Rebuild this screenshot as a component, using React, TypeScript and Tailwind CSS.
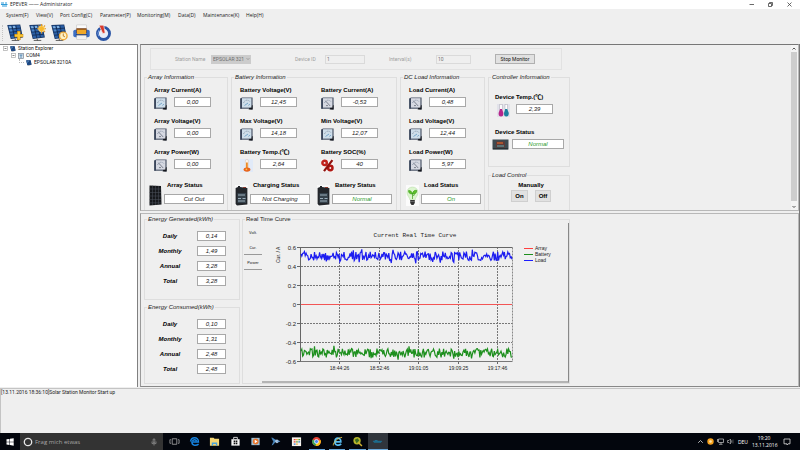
import React, { useId } from 'react';

const ui = "font-['Open_Sans',sans-serif]";
const small = "font-['Roboto',sans-serif]";

/* ---------- icons ---------- */

function SolarPanel({ children, className }: { children?: React.ReactNode; className: string }) {
  return (
    <svg viewBox="0 0 18 18" className={className} aria-hidden="true">
      <path d="M0.3 1 L14 0.4 L16.8 14.4 L4 16 Z" fill="#15325f" />
      <path d="M1.2 1.8 L13.4 1.2 L15.8 13.6 L4.6 15.1 Z" fill="#2a5fa6" />
      <path d="M5.2 1.4 L8.2 14.8 M9.3 1.3 L12.1 14.2 M1.8 5.2 L14.2 4.4 M2.8 8.6 L14.9 7.7 M3.7 11.9 L15.5 10.9" stroke="#0e2549" strokeWidth="0.8" />
      <path d="M1.9 2.4 L4.4 2.3 L5 4.4 L2.5 4.6 Z M6 2.2 L8.5 2.1 L9 4.2 L6.6 4.4 Z" fill="#7fb0e0" />
      <path d="M2.9 5.9 L5.3 5.7 L5.8 7.7 L3.5 7.9 Z" fill="#4e86c8" />
      <path d="M8.5 15.5 L9 17.3 M5 17.4 H13" stroke="#333" strokeWidth="0.8" fill="none" />
      {children}
    </svg>
  );
}

function PrinterIcon() {
  return (
    <svg viewBox="0 0 18 18" className="size-[17px]" aria-hidden="true">
      <rect x="4" y="1" width="10" height="7" fill="#fafafa" stroke="#bbb" strokeWidth="0.5" />
      <rect x="0.3" y="6" width="17.4" height="8" rx="2" fill="#3c6fc4" />
      <rect x="3.6" y="4.5" width="10.8" height="5" fill="#7a3f14" />
      <rect x="4.2" y="6" width="9.6" height="5" fill="#f0a828" />
      <rect x="3" y="11" width="12" height="2" fill="#16336e" />
      <rect x="4" y="12" width="10" height="4.5" fill="#f2f2f2" stroke="#bbb" strokeWidth="0.5" />
    </svg>
  );
}

function PowerIcon() {
  return (
    <svg viewBox="0 0 18 18" className="size-[17px]" aria-hidden="true">
      <circle cx="9" cy="10" r="6.4" fill="#e8eef8" stroke="#2a55a5" strokeWidth="3" />
      <path d="M4.2 6.5 A6 6 0 0 0 4 13" stroke="#7ea6e4" strokeWidth="1" fill="none" />
      <path d="M4.2 1.2 L9.2 1.2 L10.8 9.6 L8.2 10 Z" fill="#d83a2c" stroke="#f3f3f3" strokeWidth="0.7" />
    </svg>
  );
}

function Meter({ tone }: { tone: 'blue' | 'gray' }) {
  const face = tone === 'blue' ? '#cfdeea' : '#d6d9e2';
  return (
    <svg viewBox="0 0 13 13" className="size-[13px] shrink-0" aria-hidden="true">
      <path d="M0.3 1.5 L2 0.4 H12.6 V12.6 H11 L9 11.8 H0.3 Z" fill="#4b5568" />
      <path d="M10 9.6 L12.6 8 V12.6 H8.6 Z" fill="#14161c" />
      <rect x="2" y="1.2" width="9.4" height="9.4" fill={face} />
      <path d="M0.3 1.5 H1.8 V11.8 H0.3 Z" fill="#39455a" />
      <path d="M3.6 6 A3.6 3.6 0 0 1 9.8 4.4" stroke="#6d7c92" strokeWidth="0.7" fill="none" strokeDasharray="1 0.7" />
      {tone === 'gray' ? (
        <path d="M4.4 3.8 L9.2 9 M5 8.6 H7" stroke="#555b6c" strokeWidth="0.7" />
      ) : (
        <path d="M4.5 8.5 L8 6 M8.5 8.5 L9.8 7" stroke="#5d97c2" strokeWidth="0.8" />
      )}
    </svg>
  );
}

function Thermometer() {
  return (
    <svg viewBox="0 0 13 13" className="size-[13px] shrink-0" aria-hidden="true">
      <rect width="13" height="13" fill="#e1eaf8" />
      <rect x="5.4" y="0.5" width="3" height="9" rx="1.3" fill="#fbf4ee" stroke="#d9c0b0" strokeWidth="0.5" />
      <rect x="6" y="3.5" width="1.8" height="6.5" fill="#ee8c28" />
      <ellipse cx="7" cy="10.6" rx="3.4" ry="2.1" fill="#e8641c" />
      <circle cx="6.4" cy="10.3" r="0.9" fill="#ffc14d" />
    </svg>
  );
}

function Percent() {
  return (
    <svg viewBox="0 0 13 13" className="size-[13px] shrink-0" aria-hidden="true">
      <rect width="13" height="13" fill="#f6f3f2" />
      <circle cx="3.6" cy="3.9" r="2.2" fill="none" stroke="#c0211b" strokeWidth="2.5" />
      <circle cx="9.3" cy="9" r="2.2" fill="none" stroke="#b01813" strokeWidth="2.5" />
      <path d="M11.4 1.2 L3 12.2" stroke="#8f120e" strokeWidth="2.2" />
    </svg>
  );
}

function Flasks() {
  return (
    <svg viewBox="0 0 13 13" className="size-[13px] shrink-0" aria-hidden="true">
      <rect width="13" height="13" fill="#e2e2ea" />
      <rect x="2.8" y="0.5" width="2.4" height="5" fill="#fff" stroke="#a9a9b4" strokeWidth="0.5" />
      <path d="M3 5 H5 L6.4 9 Q6.5 12.5 4 12.5 Q1.4 12.5 1.6 9 Z" fill="#b5268b" />
      <rect x="8" y="0.5" width="2.4" height="5" fill="#fff" stroke="#a9a9b4" strokeWidth="0.5" />
      <path d="M8.2 5 H10.2 L11.8 9 Q11.8 12.5 9.3 12.5 Q6.8 12.5 7 9 Z" fill="#1a7f9e" />
    </svg>
  );
}

function ArrayIcon() {
  return (
    <svg viewBox="0 0 13 21" className="h-[21px] w-[13px] shrink-0" aria-hidden="true">
      <path d="M0.5 0.5 L12 1 L12.5 19.5 L0.5 20.5 Z" fill="#16181c" />
      <path d="M3.5 0.6 V20 M6.5 0.8 V20 M9.5 1 V19.6 M0.5 4 H12 M0.5 7.5 H12 M0.5 11 H12 M0.5 14.5 H12 M0.5 17.8 H12" stroke="#4c525c" strokeWidth="0.5" />
    </svg>
  );
}

function BatteryIcon() {
  return (
    <svg viewBox="0 0 13 21" className="h-[21px] w-[13px] shrink-0" aria-hidden="true">
      <rect width="13" height="21" fill="#f8f8f8" />
      <path d="M0.6 3 L3 2 V1 H5 V2 L12.4 3 V19.5 L2 20.5 L0.6 19 Z" fill="#23262b" />
      <rect x="2.5" y="8" width="8.5" height="10" fill="#36424c" />
      <path d="M3 10 H10 M3 13.5 H6 M7.5 13.5 H10.5 M3 16 H10" stroke="#a9bcc8" strokeWidth="0.9" />
      <path d="M8 2.5 H11" stroke="#8b3a2e" strokeWidth="1" />
    </svg>
  );
}

function BulbIcon() {
  return (
    <svg viewBox="0 0 13 21" className="h-[21px] w-[13px] shrink-0" aria-hidden="true">
      <rect width="13" height="21" fill="#fbfbfb" />
      <path d="M6.5 2 C10 2 12 4.5 12 7.5 C12 11 9.5 12 9 15 H4 C3.5 12 1 11 1 7.5 C1 4.5 3 2 6.5 2 Z" fill="#dcf5cf" stroke="#b7d9a8" strokeWidth="0.5" />
      <path d="M6.5 14 V8 M6.5 9 C3 9 2.4 7 2.6 5.5 C4.6 5.5 6 6.5 6.5 9 C7 6 8.5 5 10.8 5.4 C10.8 8 9 9.4 6.5 9 M6.5 11 L9 9.5" fill="#5fc22c" stroke="#3f9f1c" strokeWidth="0.7" />
      <path d="M4.2 15 H8.8 V18 L7.5 20 H5.5 L4.2 18 Z" fill="#333" />
      <path d="M4.2 16.5 H8.8" stroke="#999" strokeWidth="0.5" />
    </svg>
  );
}

function ControllerIcon() {
  return (
    <svg viewBox="0 0 17 11" className="h-[11px] w-[17px] shrink-0" aria-hidden="true">
      <rect x="0.5" y="0.5" width="16" height="10" fill="#3d4a50" />
      <rect x="4" y="2.5" width="9" height="6" fill="#5d3b38" />
      <rect x="5" y="3" width="6" height="2" fill="#a9532f" />
      <path d="M5 7 H12" stroke="#58b0b5" strokeWidth="1" />
      <path d="M1 9.8 H16" stroke="#20282c" strokeWidth="1" />
    </svg>
  );
}

/* ---------- building blocks ---------- */

function Group({ title, className, upright, children }: {
  title: string; className?: string; upright?: boolean; children: React.ReactNode;
}) {
  return (
    <fieldset className={`min-w-0 border border-[#dedede] ${className ?? ''}`}>
      <legend className={`ml-[2px] h-2 px-px text-[6px] leading-2 whitespace-nowrap text-[#222] ${upright ? '' : 'italic'}`}>{title}</legend>
      {children}
    </fieldset>
  );
}

function Field({ id, value, className }: { id: string; value: string; className: string }) {
  return (
    <input
      id={id}
      readOnly
      value={value}
      className={`block h-[10px] border border-[#a8a8a8] bg-white p-0 text-center text-[6px] leading-2 italic outline-none ${className}`}
    />
  );
}

function Reading({ label, value, icon }: { label: string; value: string; icon: React.ReactNode }) {
  const id = useId();
  return (
    <div>
      <label htmlFor={id} className="block text-[6px] leading-2 font-bold whitespace-nowrap">{label}</label>
      <div className="mt-[3px] flex h-[13px] gap-[7px]">
        {icon}
        <Field id={id} value={value} className="w-[37px] text-[#222]" />
      </div>
    </div>
  );
}

function Status({ label, value, icon, ok }: { label: string; value: string; icon: React.ReactNode; ok?: boolean }) {
  const id = useId();
  return (
    <div className="flex items-end gap-[2px]">
      {icon}
      <div className="mb-[2px]">
        <label htmlFor={id} className="block pl-[3px] text-[6px] leading-2 font-bold whitespace-nowrap">{label}</label>
        <Field id={id} value={value} className={`mt-[5px] w-[60px] ${ok ? 'text-[#2a9a2a]' : 'text-[#222]'}`} />
      </div>
    </div>
  );
}

function Energy({ title, rows, className }: { title: string; rows: [string, string][]; className: string }) {
  const base = useId();
  return (
    <Group title={title} className={`w-24 ${className}`}>
      <div className="flex flex-col gap-[5px] pt-2 pr-[13px]">
        {rows.map(([label, value]) => (
          <div key={label} className="flex items-center justify-end gap-[15px]">
            <label htmlFor={base + label} className="w-6 text-center text-[6px] leading-2 font-bold whitespace-nowrap italic">{label}</label>
            <Field id={base + label} value={value} className="w-[29px] text-[#222]" />
          </div>
        ))}
      </div>
    </Group>
  );
}

/* ---------- chart ---------- */

function series(seed: number, mid: number): string {
  let s = seed;
  const next = () => {
    s = (s * 1664525 + 1013904223) % 4294967296;
    return s / 4294967296;
  };
  const points: string[] = [];
  for (let i = 0; i <= 250; i++) {
    const spread = next() > 0.9 ? 15 : 9;
    const y = mid + (next() - 0.5) * spread;
    points.push(`${(39 + (i * 211) / 250).toFixed(1)},${y.toFixed(1)}`);
  }
  return points.join(' ');
}

const yTicks = ['0.6', '0.4', '0.2', '0', '-0.2', '-0.4', '-0.6'];
const xTicks: [number, string][] = [[77.5, '18:44:26'], [117.5, '18:52:46'], [156.5, '19:01:05'], [196.5, '19:09:25'], [235.5, '19:17:46']];

function Chart() {
  return (
    <svg viewBox="0 0 306 158" className="block h-[158px] w-[306px]" role="img" aria-label="Current Real Time Curve">
      <text x="153" y="14" textAnchor="middle" className="fill-[#222] font-['Liberation_Mono',monospace] text-[6px]">Current Real Time Curve</text>
      <text transform="translate(18 40) rotate(-90)" className="fill-[#222] text-[5px]">Cur. / A</text>
      {yTicks.map((t, i) => (
        <g key={t}>
          <text x="34" y={26.5 + i * 19} textAnchor="end" className="fill-[#222] text-[6px]">{t}</text>
          <path d={`M35 ${24.5 + i * 19} H39`} stroke="#666" />
          {i > 0 && i < 6 && <path d={`M39 ${24.5 + i * 19} H250`} stroke="#777" strokeDasharray="2 1" />}
        </g>
      ))}
      {xTicks.map(([x, t]) => (
        <g key={t}>
          <path d={`M${x} 24 V139`} stroke="#777" strokeDasharray="2 1" />
          <path d={`M${x} 138 V141`} stroke="#666" />
          <text x={x} y="147" textAnchor="middle" className="fill-[#222] text-[5px]">{t}</text>
        </g>
      ))}
      <path d="M38.5 139 V24.5 H250.5" stroke="#666" fill="none" />
      <path d="M250.5 24.5 V138.5" stroke="#888" strokeDasharray="2 1" />
      <path d="M38.5 138.5 H250.5" stroke="#777" />
      <path d="M39 81.5 H250" stroke="#f25555" />
      <polyline points={series(11, 130)} fill="none" stroke="#1d8f1d" strokeWidth="1.2" />
      <polyline points={series(77, 33)} fill="none" stroke="#1c1cf0" strokeWidth="1.2" />
      {[['Array', '#ff4040'], ['Battery', '#1d8f1d'], ['Load', '#1c1cff']].map(([name, color], i) => (
        <g key={name}>
          <path d={`M262 ${25.5 + i * 6} H271`} stroke={color} />
          <text x="273" y={27 + i * 6} className="fill-[#222] text-[5px]">{name}</text>
        </g>
      ))}
    </svg>
  );
}

/* ---------- window parts ---------- */

const menus: [string, string][] = [
  ['System(F)', 'w-[30px]'], ['View(V)', 'w-6'], ['Port Config(C)', 'w-10'], ['Parameter(P)', 'w-[37px]'],
  ['Monitoring(M)', 'w-[41px]'], ['Data(D)', 'w-[25px]'], ['Maintenance(K)', 'w-[43px]'], ['Help(H)', 'w-6'],
];

function Header() {
  return (
    <header className={`bg-[#efefef] ${ui}`}>
      <div className="flex h-[9px] items-center bg-white pl-px">
        <svg viewBox="0 0 7 5" className="h-[5px] w-[7px]" aria-hidden="true">
          <path d="M0 1 H3 M0 2.5 H6.5 M1 4 H6 M4 1 H6" stroke="#2f9bd8" strokeWidth="1" />
        </svg>
        <h1 className="ml-[2px] flex-1 text-[5px] leading-[9px] whitespace-nowrap text-[#222]">EPEVER —— Administrator</h1>
        <div className="flex gap-3 pr-[7px]">
          <button aria-label="Minimize" className="w-[7px]">
            <svg viewBox="0 0 7 7" className="size-[7px]"><path d="M1.5 3.5 H6" stroke="#444" strokeWidth="0.8" /></svg>
          </button>
          <button aria-label="Restore" className="w-[7px]">
            <svg viewBox="0 0 7 7" className="size-[7px]"><path d="M1.5 2.5 H4.5 V5.5 H1.5 Z M2.5 2.5 V1.5 H5.5 V4.5 H4.5" fill="none" stroke="#444" strokeWidth="0.8" /></svg>
          </button>
          <button aria-label="Close" className="w-[7px]">
            <svg viewBox="0 0 7 7" className="size-[7px]"><path d="M1.5 1.5 L5.5 5.5 M5.5 1.5 L1.5 5.5" stroke="#444" strokeWidth="0.8" /></svg>
          </button>
        </div>
      </div>
      <nav className="flex h-3 items-center pl-[6px] text-[5px] leading-3 text-[#222]">
        {menus.map(([name, width]) => (
          <button key={name} className={`shrink-0 text-left whitespace-nowrap ${width}`}>{name}</button>
        ))}
      </nav>
      <div className="flex h-[23px] items-center gap-[5px] pl-[2px]">
        <div className="h-4 border-l border-dotted border-[#c4c4c4]" />
        <button aria-label="Add station" className="-ml-px">
          <SolarPanel className="size-[17px]">
            <path d="M12.5 7.5 V17 M7.8 12.3 H17.2" stroke="#b87a0c" strokeWidth="3.6" />
            <path d="M12.5 8 V16.6 M8.3 12.3 H16.8" stroke="#fbc834" strokeWidth="2.5" />
          </SolarPanel>
        </button>
        <button aria-label="Station settings">
          <SolarPanel className="size-[17px]">
            <circle cx="13.3" cy="5" r="3.2" fill="#f8b82c" stroke="#fde08a" strokeWidth="1" />
            <path d="M13.3 0 V2 M13.3 8 V10 M8.5 5 H10 M16.5 5 H18 M10 1.8 L11 2.8 M15.7 7.4 L17 8.6 M17 1.6 L15.8 2.7" stroke="#e0982a" strokeWidth="1.2" />
          </SolarPanel>
        </button>
        <button aria-label="Station history">
          <SolarPanel className="size-[17px]">
            <circle cx="13" cy="12.6" r="4" fill="#fdf0c4" stroke="#eda93a" strokeWidth="1.5" />
            <path d="M13 10 V12.8 L14.8 13.6" stroke="#b8741a" strokeWidth="0.9" fill="none" />
          </SolarPanel>
        </button>
        <button aria-label="Print"><PrinterIcon /></button>
        <button aria-label="Exit"><PowerIcon /></button>
      </div>
    </header>
  );
}

function Toggle() {
  return (
    <svg viewBox="0 0 5 5" className="size-[5px]" aria-hidden="true">
      <rect x="0.5" y="0.5" width="4" height="4" fill="#fff" stroke="#aaa" strokeWidth="0.7" />
      <path d="M1.5 2.5 H3.5" stroke="#555" strokeWidth="0.7" />
    </svg>
  );
}

function Tree() {
  return (
    <aside className={`w-[138px] shrink-0 border-t border-r border-[#808080] bg-white pl-[3px] text-[5px] leading-[7px] text-[#111] ${small}`}>
      <ul>
        <li>
          <div className="flex items-center gap-[2px]">
            <Toggle />
            <SolarPanel className="size-[6px]" />
            Station Explorer
          </div>
          <ul className="pl-2">
            <li>
              <div className="flex items-center gap-[2px]">
                <Toggle />
                <svg viewBox="0 0 6 6" className="size-[6px]" aria-hidden="true">
                  <rect x="0.5" y="0.5" width="5" height="5" fill="#d7e2ec" stroke="#7b8794" strokeWidth="0.7" />
                  <path d="M1.5 2 H4.5 M3 2 V5" stroke="#3c78a8" strokeWidth="0.8" />
                </svg>
                COM4
              </div>
              <div className="flex items-center gap-[2px] pl-2">
                <span className="mb-[3px] h-[4px] w-[5px] border-b border-l border-dotted border-[#bbb]" />
                <SolarPanel className="size-[6px]" />
                <span>EPSOLAR 3210A</span>
              </div>
            </li>
          </ul>
        </li>
      </ul>
    </aside>
  );
}

function StationBar() {
  const dim = 'text-[5px] leading-2 text-[#a0a0a0]';
  return (
    <div className={`ml-[6px] flex h-[22px] w-[412px] items-center border border-[#e2e2e2] pl-6 ${small}`}>
      <label htmlFor="station" className={`w-9 ${dim}`}>Station Name</label>
      <div className="flex h-[9px] w-10 items-center bg-[#cccccc]">
        <select id="station" disabled className="w-9 appearance-none bg-transparent pl-[2px] text-[5px] leading-[9px] text-[#6f6f6f] opacity-100">
          <option>EPSOLAR 321</option>
        </select>
        <svg viewBox="0 0 4 4" className="-ml-px size-1" aria-hidden="true"><path d="M0.5 1 L2 2.7 L3.5 1" fill="none" stroke="#888" strokeWidth="0.6" /></svg>
      </div>
      <label htmlFor="device" className={`ml-11 w-[30px] ${dim}`}>Device ID</label>
      <input id="device" disabled defaultValue="1" className="h-[9px] w-10 border border-[#dadada] p-0 pl-px text-[5px] leading-2 text-[#777]" />
      <label htmlFor="interval" className={`ml-6 w-[47px] ${dim}`}>Interval(s)</label>
      <input id="interval" disabled defaultValue="10" className="h-[9px] w-[35px] border border-[#dadada] p-0 pl-px text-[5px] leading-2 text-[#777]" />
      <button className="ml-6 h-[10px] w-10 border border-[#b0b0b0] bg-[#e1e1e1] text-[5px] leading-2 text-[#111]">Stop Monitor</button>
    </div>
  );
}

function Monitor() {
  const tempId = useId();
  const statusId = useId();
  return (
    <section className="flex border border-[#b8b8b8] border-t-[#777] border-l-[#999]">
      <div className="flex-1 pt-[3px] pl-[3px]">
        <StationBar />
        <div className="mt-[3px] flex gap-[3px]">
          <Group title="Array Information" className="w-[84px] border-b-0 pb-1">
            <div className="flex flex-col gap-[7px] pt-[5px] pl-[9px]">
              <Reading label="Array Current(A)" value="0,00" icon={<Meter tone="blue" />} />
              <Reading label="Array Voltage(V)" value="0,00" icon={<Meter tone="gray" />} />
              <Reading label="Array Power(W)" value="0,00" icon={<Meter tone="gray" />} />
            </div>
            <div className="mt-[9px] pl-1"><Status label="Array Status" value="Cut Out" icon={<ArrayIcon />} /></div>
          </Group>
          <Group title="Battery Information" className="w-[166px] border-b-0 pb-1">
            <div className="grid grid-cols-[81px_1fr] gap-y-[7px] pt-[5px] pl-2">
              <Reading label="Battery Voltage(V)" value="12,45" icon={<Meter tone="blue" />} />
              <Reading label="Battery Current(A)" value="-0,53" icon={<Meter tone="gray" />} />
              <Reading label="Max Voltage(V)" value="14,18" icon={<Meter tone="blue" />} />
              <Reading label="Min Voltage(V)" value="12,07" icon={<Meter tone="blue" />} />
              <Reading label="Battery Temp.(℃)" value="2,64" icon={<Thermometer />} />
              <Reading label="Battery SOC(%)" value="40" icon={<Percent />} />
            </div>
            <div className="mt-[9px] grid grid-cols-[82px_1fr] pl-[3px]">
              <Status label="Charging Status" value="Not Charging" icon={<BatteryIcon />} />
              <Status label="Battery Status" value="Normal" icon={<BatteryIcon />} ok />
            </div>
          </Group>
          <Group title="DC Load Information" className="w-[85px] border-b-0 pb-1">
            <div className="flex flex-col gap-[7px] pt-[5px] pl-2">
              <Reading label="Load Current(A)" value="0,48" icon={<Meter tone="gray" />} />
              <Reading label="Load Voltage(V)" value="12,44" icon={<Meter tone="blue" />} />
              <Reading label="Load Power(W)" value="5,97" icon={<Meter tone="gray" />} />
            </div>
            <div className="mt-[9px] pl-[5px]"><Status label="Load Status" value="On" icon={<BulbIcon />} ok /></div>
          </Group>
          <div className="flex w-[82px] flex-col gap-1">
            <Group title="Controller Information" className="h-[94px]">
              <div className="pt-3 pl-[6px]">
                <label htmlFor={tempId} className="block text-[6px] leading-2 font-bold whitespace-nowrap">Device Temp.(℃)</label>
                <div className="mt-[3px] flex gap-[6px] pl-[2px]">
                  <Flasks />
                  <Field id={tempId} value="2,39" className="w-[37px] text-[#222]" />
                </div>
                <label htmlFor={statusId} className="mt-[11px] block text-[6px] leading-2 font-bold whitespace-nowrap">Device Status</label>
              </div>
              <div className="mt-[3px] flex gap-[3px] pl-[3px]">
                <ControllerIcon />
                <Field id={statusId} value="Normal" className="w-[52px] text-[#2a9a2a]" />
              </div>
            </Group>
            <Group title="Load Control" className="flex-1 border-b-0">
              <p className="pt-[2px] pl-1 text-center text-[6px] leading-2 font-bold">Manually</p>
              <div className="mt-px flex justify-center gap-[7px] pl-1">
                <button className="h-3 w-[17px] border border-[#cfcfcf] bg-[#e1e1e1] text-[6px] leading-[10px] font-bold">On</button>
                <button className="h-3 w-4 border border-[#cfcfcf] bg-[#e1e1e1] text-[6px] leading-[10px] font-bold">Off</button>
              </div>
            </Group>
          </div>
        </div>
      </div>
      <div className="flex w-[7px] flex-col bg-[#f4f4f4] pr-px">
        <button aria-label="Scroll up" className="h-[7px]">
          <svg viewBox="0 0 6 7" className="h-[7px] w-[6px]"><path d="M1.5 4.5 L3 3 L4.5 4.5" fill="none" stroke="#444" strokeWidth="0.9" /></svg>
        </button>
        <div className="flex-1 bg-[#cdcdcd]" />
        <button aria-label="Scroll down" className="h-[9px]">
          <svg viewBox="0 0 6 9" className="h-[9px] w-[6px]"><path d="M1.5 5 L3 6.5 L4.5 5" fill="none" stroke="#444" strokeWidth="0.9" /></svg>
        </button>
      </div>
    </section>
  );
}

function History() {
  return (
    <section className="mt-[2px] flex flex-1 gap-[2px] border border-[#b8b8b8] border-b-[#888] border-l-[#999] pt-px pb-[2px] pl-[3px]">
      <div className="flex flex-col gap-[3px]">
        <Energy title="Energy Generated(kWh)" className="h-[85px]" rows={[['Daily', '0,14'], ['Monthly', '1,49'], ['Annual', '3,28'], ['Total', '3,28']]} />
        <Energy title="Energy Consumed(kWh)" className="flex-1" rows={[['Daily', '0,10'], ['Monthly', '1,31'], ['Annual', '2,48'], ['Total', '2,48']]} />
      </div>
      <Group title="Real Time Curve" upright className="w-[328px]">
        <div className="flex">
          <div className={`flex w-[20px] flex-col items-start pt-[2px] pl-px text-[#222] ${small}`}>
            <button className="h-[15px] w-[18px] text-[4px] leading-[15px]">Volt.</button>
            <button className="h-[15px] w-[18px] border-b border-[#999] text-[4px] leading-[15px]">Cur.</button>
            <button className="h-[15px] w-[18px] border-b border-[#999] text-[4px] leading-[15px]">Power</button>
          </div>
          <div className="border-r border-b-2 border-r-[#888] border-b-[#b4b4b4]">
            <Chart />
          </div>
        </div>
      </Group>
    </section>
  );
}

/* ---------- taskbar ---------- */

const apps: { name: string; state?: 'open' | 'active'; art: React.ReactNode }[] = [
  { name: 'Task view', art: <path d="M3.5 3 H8.5 V9 H3.5 Z M2 4 H1 V8 H2 M10 4 H11 V8 H10" fill="none" stroke="#bbb" strokeWidth="0.8" /> },
  { name: 'Edge', art: <path d="M10.5 8.8 C7 11.3 3 10 3.2 6.6 H10.3 C10.3 3.2 8.2 2 6.2 2 C3.8 2 2 4 1.7 6 M3.8 5.4 C4.5 3.6 8 3.6 8.1 5.6" fill="none" stroke="#1683e0" strokeWidth="1.6" /> },
  { name: 'Explorer', art: <><path d="M1 2 H5 L6 3 H11 V10.5 H1 Z" fill="#f5d675" /><path d="M3 7 H9 V10.5 H7.5 V8.8 H4.5 V10.5 H3 Z" fill="#4aa3dc" /></> },
  { name: 'Store', art: <><path d="M1.5 3.5 H10.5 V10.5 H1.5 Z" fill="#f4f4f4" /><path d="M4 3.5 V1.5 H8 V3.5" fill="none" stroke="#f4f4f4" strokeWidth="0.9" /><path d="M4 5 H5.7 V6.7 H4 Z M6.3 5 H8 V6.7 H6.3 Z M4 7.3 H5.7 V9 H4 Z M6.3 7.3 H8 V9 H6.3 Z" fill="#111" /></> },
  { name: 'Media player', art: <><rect x="1.5" y="2" width="9" height="8" fill="#9cbfd6" /><circle cx="6.2" cy="6" r="3.2" fill="#e8742a" /><path d="M5.2 4.2 L8.2 6 L5.2 7.8 Z" fill="#fff" /></> },
  { name: 'Control', art: <><path d="M2 2 L7 5 L2.5 10 L4 6 Z" fill="#4d8cc4" stroke="#4d8cc4" strokeWidth="0.8" /><circle cx="7.6" cy="5.8" r="2" fill="#a9c4e0" /><path d="M8 5.8 H11" stroke="#5a95d0" /></> },
  { name: 'Office', art: <><rect x="1" y="1.5" width="10" height="9.5" fill="#f8f4ee" /><path d="M3 4 H5 M3 6.4 H5" stroke="#e04438" strokeWidth="1.5" /><path d="M5.6 4 H7.4 M5.6 8.8 H7.4" stroke="#f2a62c" strokeWidth="1.5" /><path d="M8 4 H10 M5.6 6.4 H7.4" stroke="#55a83a" strokeWidth="1.5" /><path d="M8 6.4 H10 M3 8.8 H5" stroke="#3b7fd0" strokeWidth="1.5" /></> },
  { name: 'Chrome', state: 'open', art: <><circle cx="6" cy="6" r="4.8" fill="#e34133" /><path d="M6 6 L1.8 3.8 A4.8 4.8 0 0 0 5.2 10.8 Z" fill="#3aa757" /><path d="M6 6 L5.2 10.8 A4.8 4.8 0 0 0 10.6 4.4 Z" fill="#fbc116" /><circle cx="6" cy="6" r="2.2" fill="#4a8af4" stroke="#fff" strokeWidth="0.8" /></> },
  { name: 'Internet Explorer', state: 'open', art: <><path d="M10 8.5 C7 11.3 3 9.8 3.2 6.4 H9.6 C9.8 3.4 8 2.4 6.4 2.4 C4.4 2.4 3.2 4 3.2 6.4" fill="none" stroke="#58bdf2" strokeWidth="1.9" /><path d="M1.4 10.3 C1 7 7 1.5 11 1.5" fill="none" stroke="#f3d04a" strokeWidth="0.9" /></> },
  { name: 'Search tool', state: 'open', art: <><circle cx="5.5" cy="5.2" r="4" fill="#b5b52a" /><path d="M3 4 L6 2.5 L8 5 L5 8 Z" fill="#3c6b24" /><path d="M7 7 L10.8 10.8" stroke="#d0b030" strokeWidth="1.6" /></> },
  { name: 'Solar Station Monitor', state: 'active', art: <path d="M1 5.8 H11 M2 6.8 H10 M3 5 H6" stroke="#1685b4" strokeWidth="0.8" /> },
];

function Taskbar() {
  return (
    <footer className={`flex h-[17px] items-center bg-[#03060d] text-white ${ui}`}>
      <button aria-label="Start" className="flex w-5 justify-center">
        <svg viewBox="0 0 8 8" className="size-2"><path d="M0.5 1.3 L3.5 0.9 V3.7 H0.5 Z M4 0.8 L7.7 0.3 V3.7 H4 Z M0.5 4.2 H3.5 V7 L0.5 6.6 Z M4 4.2 H7.7 V7.7 L4 7.1 Z" fill="#fff" /></svg>
      </button>
      <div className="flex h-full w-[143px] items-center bg-[#333] pl-[3px]">
        <svg viewBox="0 0 10 10" className="size-[10px]" aria-hidden="true"><circle cx="5" cy="5" r="3.7" fill="none" stroke="#e6e6e6" strokeWidth="1.3" /></svg>
        <input aria-label="Search" placeholder="Frag mich etwas" className="ml-[2px] w-[116px] p-0 text-[6px] leading-[10px] outline-none placeholder:text-[#a6a6a6]" />
        <svg viewBox="0 0 6 8" className="h-2 w-[6px]" aria-hidden="true"><path d="M2.2 1 H3.8 V4.5 H2.2 Z M1 3.5 V5.6 H5 V3.5 M3 5.6 V7.5" fill="none" stroke="#999" strokeWidth="0.7" /></svg>
      </div>
      <div className="ml-px grid h-full w-56 grid-cols-11">
        {apps.map((app) => (
          <button
            key={app.name}
            aria-label={app.name}
            className={`flex items-center justify-center border-b ${app.state ? 'border-[#6aa9dc]' : 'border-transparent'} ${app.state === 'active' ? 'bg-[#30353c]' : ''} ${app.state === 'open' ? 'mx-[2px]' : ''}`}
          >
            <svg viewBox="0 0 12 12" className="size-[11px] shrink-0">{app.art}</svg>
          </button>
        ))}
      </div>
      <div className="ml-auto flex items-center gap-[3px] pr-[9px] text-[5px] leading-[8px]">
        <svg viewBox="0 0 7 7" className="size-[7px]" aria-hidden="true"><path d="M1.2 4.8 L3.5 2.5 L5.8 4.8" fill="none" stroke="#ddd" strokeWidth="0.8" /></svg>
        <svg viewBox="0 0 7 7" className="size-[7px]" aria-hidden="true"><circle cx="3.5" cy="3.5" r="3.2" fill="#f6a11c" /><circle cx="3.5" cy="3.5" r="1.3" fill="#ffe6b0" /></svg>
        <svg viewBox="0 0 7 7" className="size-[7px]" aria-hidden="true"><path d="M1.5 1 H6.5 V4.5 H1.5 Z M4 4.5 V6 M2 6.3 H5.5 M0.5 1 V4" fill="none" stroke="#ccc" strokeWidth="0.7" /></svg>
        <svg viewBox="0 0 7 7" className="size-[7px]" aria-hidden="true"><path d="M0.5 2.5 H2 L3.5 1 V6 L2 4.5 H0.5 Z M4.7 2.3 V4.7" fill="none" stroke="#ccc" strokeWidth="0.6" /><path d="M6 1.5 V5.5" stroke="#777" strokeWidth="0.6" /></svg>
        <span className="ml-px">DEU</span>
        <time className="ml-px w-6 text-center leading-[7px] whitespace-nowrap">19:20<br />13.11.2016</time>
        <svg viewBox="0 0 8 8" className="ml-1 size-2" aria-hidden="true"><path d="M1 1 H7 V5.8 H5 L4 7 V5.8 H1 Z" fill="none" stroke="#ddd" strokeWidth="0.8" /></svg>
      </div>
    </footer>
  );
}

export default function App() {
  return (
    <div className="flex min-h-screen flex-col overflow-hidden bg-[#efefef] font-['Liberation_Sans',Arial,'Noto_Sans_CJK_SC',sans-serif] text-black">
      <Header />
      <main className="flex">
        <Tree />
        <div className="ml-[2px] flex min-w-0 flex-1 flex-col border-r border-[#777]">
          <Monitor />
          <History />
        </div>
      </main>
      <div className={`mt-px flex-1 border-t border-l border-[#c4c4c4] text-[5px] leading-[7px] text-[#222] ${small}`}>[13.11.2016 18:36:10]Solar Station Monitor Start up</div>
      <Taskbar />
    </div>
  );
}
